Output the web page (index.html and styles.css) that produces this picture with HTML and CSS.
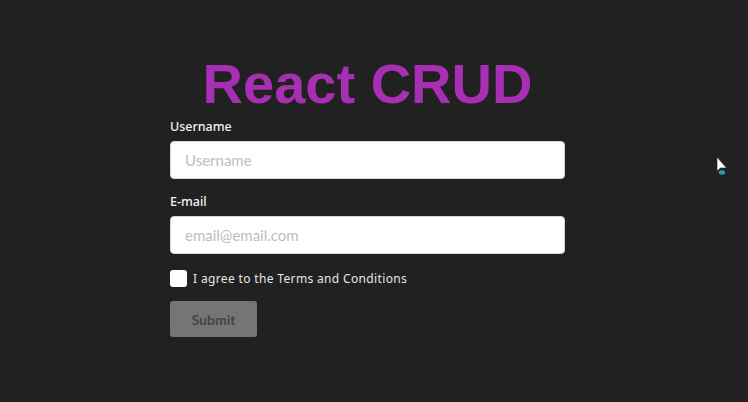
FILE: index.html
```html
<!DOCTYPE html>
<html>
<head>
<meta charset="utf-8">
<link rel="stylesheet" href="styles.css">
</head>
<body>
<main class="page">
  <form class="form">
    <h1 class="title">React CRUD</h1>
    <label class="label" for="username">Username</label>
    <input class="input" id="username" type="text" placeholder="Username">
    <label class="label label-email" for="email">E-mail</label>
    <input class="input" id="email" type="email" placeholder="email@email.com">
    <div class="check-row">
      <span class="checkbox"></span>
      <span class="check-text">I agree to the Terms and Conditions</span>
    </div>
    <button class="submit" type="button">Submit</button>
  </form>
</main>
<svg class="cursor" width="14" height="20" viewBox="0 0 14 20">
  <path d="M1 1 L1 15 L4.5 12 L10.5 12 Z" fill="#ffffff" stroke="#222" stroke-width="0.6"/>
  <ellipse cx="6" cy="16.5" rx="3.2" ry="2.2" fill="#1aa3b8"/>
</svg>
</body>
</html>
```
FILE: styles.css
```css
html, body {
  margin: 0;
  padding: 0;
  background: #212121;
  height: 100%;
}
.page {
  display: flex;
  justify-content: center;
  padding-right: 13px;
}
.form {
  width: 395px;
  display: flex;
  flex-direction: column;
  padding-top: 52px;
}
.title {
  margin: 0;
  font-family: "Liberation Sans", Arial, sans-serif;
  font-weight: 700;
  font-size: 56px;
  line-height: 64px;
  color: #a72fb4;
  text-align: center;
}
.label {
  font-family: "Noto Sans", "DejaVu Sans", sans-serif;
  font-size: 12.5px;
  font-weight: 500;
  color: #f2f2f2;
  line-height: 16px;
  margin-top: 3px;
  margin-bottom: 6px;
}
.label-email {
  margin-top: 15px;
}
.input {
  box-sizing: border-box;
  height: 38px;
  width: 100%;
  border: 1px solid #d6d6d6;
  border-radius: 4px;
  background: #fff;
  padding: 0 14px;
  font-family: Lato, sans-serif;
  font-size: 15px;
  color: #333;
  outline: none;
}
.input::placeholder {
  color: #bdbdbd;
}
.check-row {
  display: flex;
  align-items: center;
  gap: 6px;
  margin-top: 16px;
}
.checkbox {
  width: 17px;
  height: 17px;
  background: #fff;
  border-radius: 3px;
}
.check-text {
  font-family: "Noto Sans", "DejaVu Sans", sans-serif;
  font-size: 12px;
  color: #e6e6e6;
  letter-spacing: 0.35px;
}
.submit {
  margin-top: 14px;
  width: 87px;
  height: 36px;
  border: none;
  border-radius: 3px;
  background: #757575;
  color: #454545;
  font-family: Lato, sans-serif;
  font-weight: 700;
  font-size: 14px;
  padding: 0;
}
.cursor {
  position: absolute;
  left: 716px;
  top: 156px;
}
```
